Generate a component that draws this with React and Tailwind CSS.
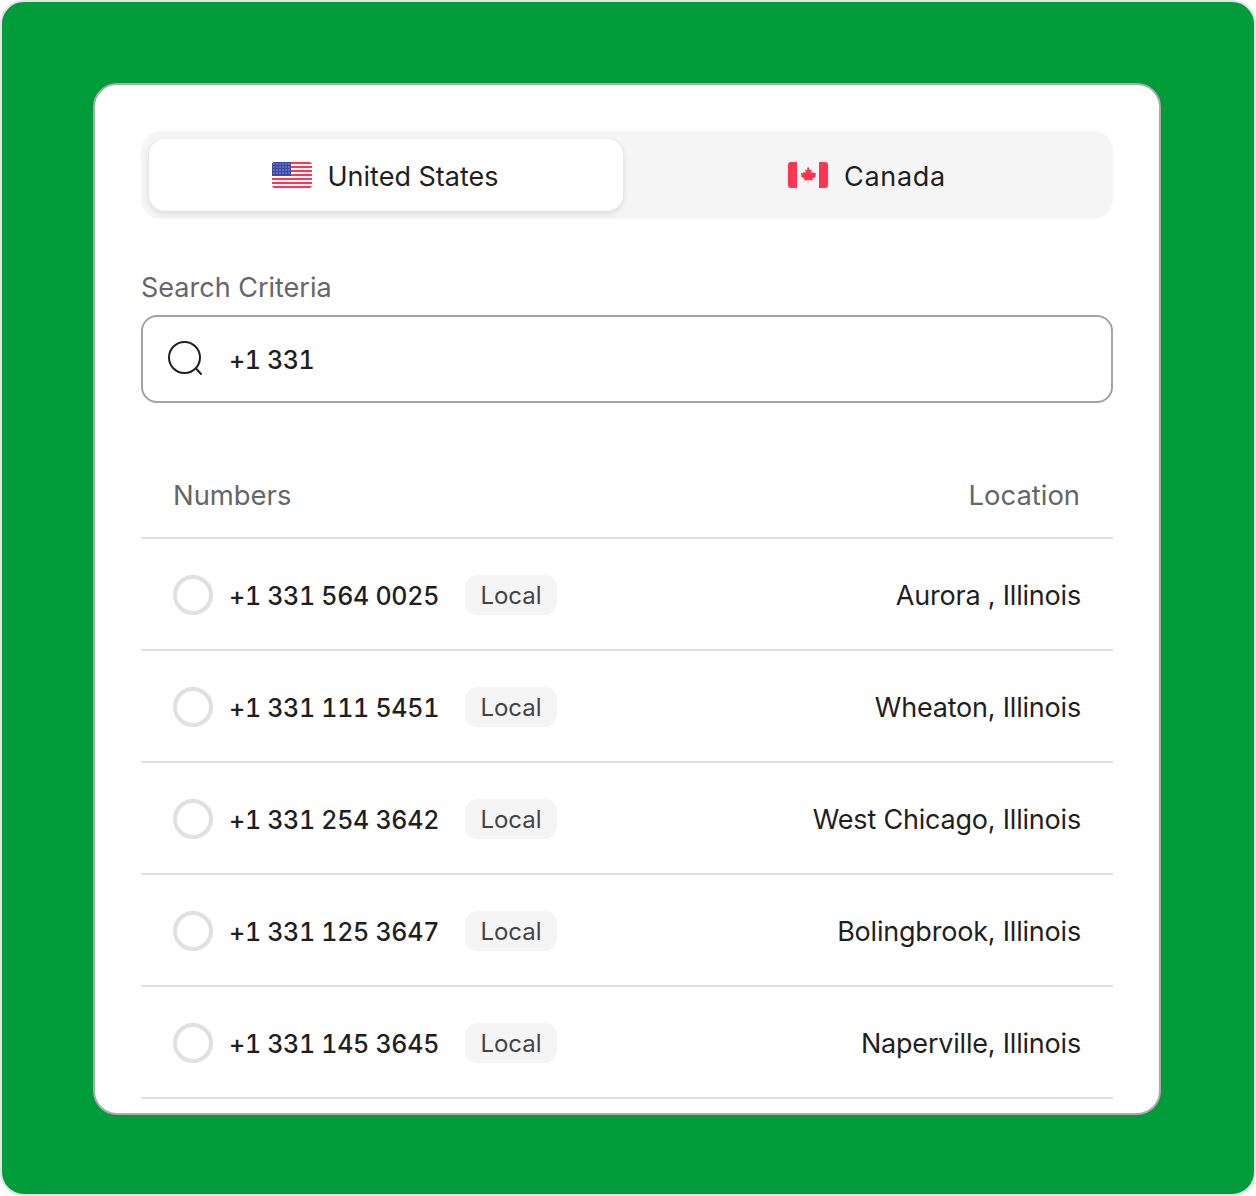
import React from 'react';

const numbers = [
  { phone: '+1 331 564 0025', location: 'Aurora , Illinois' },
  { phone: '+1 331 111 5451', location: 'Wheaton, Illinois' },
  { phone: '+1 331 254 3642', location: 'West Chicago, Illinois' },
  { phone: '+1 331 125 3647', location: 'Bolingbrook, Illinois' },
  { phone: '+1 331 145 3645', location: 'Naperville, Illinois' },
];

const UsFlag = () => (
  <svg width="40" height="26" viewBox="0 0 40 26">
    <defs>
      <clipPath id="us-clip">
        <rect width="40" height="26" rx="3" />
      </clipPath>
    </defs>
    <g clipPath="url(#us-clip)">
      <rect width="40" height="26" fill="#fff" />
      {[0, 4, 8, 12, 16, 20, 24].map(y => (
        <rect key={y} y={y} width="40" height="2" fill="#ff3352" />
      ))}
      <rect width="19" height="14" fill="#3f4ba3" />
      {[2, 5, 8, 11].map(y =>
        [2, 5, 8, 11, 14, 17].map(x => <rect key={`${x}-${y}`} x={x - 0.5} y={y - 0.5} width="1" height="1" fill="#c9cdf0" />)
      )}
    </g>
  </svg>
);

const CaFlag = () => (
  <svg width="40" height="26" viewBox="0 0 40 26">
    <path d="M3 0h6v26H3a3 3 0 0 1-3-3V3a3 3 0 0 1 3-3zM31 0h6a3 3 0 0 1 3 3v20a3 3 0 0 1-3 3h-6z" fill="#ff3352" />
    <path transform="translate(20 4) scale(1.15) translate(-20 -5)" d="M20 5.5l1.8 3.2 1.4-.7-.5 3.4 1.7-1.4.6 1.3 2-.3-.6 2.2.8.5-3.4 2.6.4 1.3-3.5-.5h-.6l-3.5.5.4-1.3-3.4-2.6.8-.5-.6-2.2 2 .3.6-1.3 1.7 1.4-.5-3.4 1.4.7z" fill="#ff3352" />
    <rect x="19.5" y="18" width="1" height="4" fill="#ffb3be" />
  </svg>
);

const SearchIcon = () => (
  <svg width="36" height="36" viewBox="0 0 36 36" fill="none" stroke="#1f1f1f" strokeWidth="2" strokeLinecap="round">
    <circle cx="16.5" cy="16.5" r="15.5" />
    <path d="M28 27.5l5 5.5" />
  </svg>
);

const App = () => {
  return (
    <div className="w-[1256px] h-[1196px] bg-white font-['Inter',sans-serif]">
      <div className="h-full rounded-[24px] border-2 border-[#e4e4e4] bg-[#009b3a] pl-[91px] pt-[81px]">
        <div className="w-[1068px] h-[1032px] overflow-hidden rounded-[24px] border-2 border-[#ababab] bg-white px-[46px] pt-[46px]">
          <div className="grid h-[88px] grid-cols-2 gap-2 rounded-[20px] bg-[#f5f5f5] p-2">
            <div className="flex items-center justify-center gap-4 rounded-[16px] bg-white shadow-[0_2px_6px_rgba(0,0,0,0.12)]">
              <UsFlag />
              <span className="mt-1 -translate-x-px text-[27px] text-[#1f1f1f]">United States</span>
            </div>
            <div className="flex items-center justify-center gap-4 pr-[2px]">
              <CaFlag />
              <span className="mt-1 text-[27px] tracking-[0.7px] text-[#1f1f1f]">Canada</span>
            </div>
          </div>

          <div className="mt-[52px] text-[27px] leading-[34px] text-[#666666]">Search Criteria</div>
          <div className="mt-[10px] flex h-[88px] items-center gap-[25px] rounded-[16px] border-2 border-[#a3a3a3] pl-[25px]">
            <SearchIcon />
            <span className="mt-1 text-[25px] font-medium tabular-nums tracking-[-0.4px] text-[#1f1f1f]">+1 331</span>
          </div>

          <div className="mt-[48px] flex h-[88px] items-center justify-between border-b-2 border-[#e0e0e0] pl-8 pr-[33px] pt-1 text-[27.4px] text-[#666666]">
            <span>Numbers</span>
            <span>Location</span>
          </div>

          {numbers.map(n => (
            <div key={n.phone} className="flex h-[112px] items-center border-b-2 border-[#e0e0e0] px-8 pt-[2px]">
              <div className="h-10 w-10 rounded-full border-4 border-[#e0e0e0]" />
              <span className="ml-4 mt-1 w-[236px] text-[25px] font-medium tabular-nums tracking-[-0.3px] text-[#1f1f1f]">{n.phone}</span>
              <span className="flex h-10 w-[92px] items-center justify-center rounded-[12px] bg-[#f5f5f5] pt-[2px] text-[24px] text-[#444444]">Local</span>
              <span className="ml-auto mt-[2px] text-[27px] tracking-[-0.2px] text-[#1f1f1f]">{n.location}</span>
            </div>
          ))}
        </div>
      </div>
    </div>
  );
};

export default App;
